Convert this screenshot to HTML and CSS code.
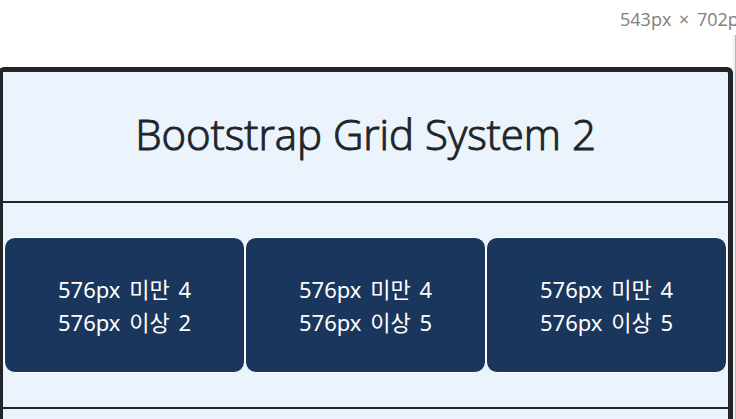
FILE: index.html
```
<!DOCTYPE html>
<html lang="ko">
<head>
<meta charset="utf-8">
<meta name="viewport" content="width=device-width, initial-scale=1">
<title>Bootstrap Grid System 2</title>
<link rel="stylesheet" href="styles.css">
</head>
<body>
<div class="page">
  <div class="viewport-size">543px <span class="term">×</span> 702px</div>
  <div class="stage">
    <main class="container">
      <header class="section title-section">
        <h1 class="title">Bootstrap Grid System 2</h1>
      </header>
      <section class="section row">
        <div class="cell">576px <span class="term">미만</span> 4<br>576px <span class="term">이상</span> 2</div>
        <div class="cell">576px <span class="term">미만</span> 4<br>576px <span class="term">이상</span> 5</div>
        <div class="cell">576px <span class="term">미만</span> 4<br>576px <span class="term">이상</span> 5</div>
      </section>
    </main>
    <div class="edge"></div>
  </div>
</div>
</body>
</html>
```

FILE: styles.css
```
* {
  box-sizing: border-box;
}

body {
  margin: 0;
  background: #fff;
  color: #212529;
  font-family: "Noto Sans", "Noto Sans CJK KR", sans-serif;
}

.page {
  display: flex;
  flex-direction: column;
  height: 100vh;
  overflow: hidden;
}

.viewport-size {
  flex: none;
  height: 35px;
  padding-left: calc(100% - 116px);
  font-family: "Open Sans", "Noto Sans", sans-serif;
  font-size: 18px;
  line-height: 38px;
  white-space: nowrap;
  color: #808080;
}

.term {
  margin: 0 3px;
}

.stage {
  flex: 1;
  display: flex;
}

.container {
  flex: 1;
  margin: 32px 0 0 -2px;
  border: 5px solid #212529;
  border-bottom: 0;
  border-radius: 6px 6px 0 0;
  background: #ebf4fc;
}

.edge {
  width: 3px;
  background: #f0f0f0;
  border-right: 1px solid #b8b8b8;
}

.section {
  border-bottom: 2px solid #212529;
}

.title-section {
  padding: 30px 0 35px;
}

.title {
  margin: 0;
  font-family: "Open Sans", "Noto Sans", sans-serif;
  font-size: 42px;
  font-weight: 300;
  line-height: 64px;
  text-align: center;
  -webkit-text-stroke: 1px #212529;
}

.row {
  display: flex;
  padding: 34px 1px;
}

.cell {
  flex: 1;
  padding: 35px 0 33px;
  border: 1px solid #fff;
  border-radius: 11px;
  background: #1b365d;
  color: #fff;
  font-size: 22px;
  line-height: 33px;
  text-align: center;
}
```
